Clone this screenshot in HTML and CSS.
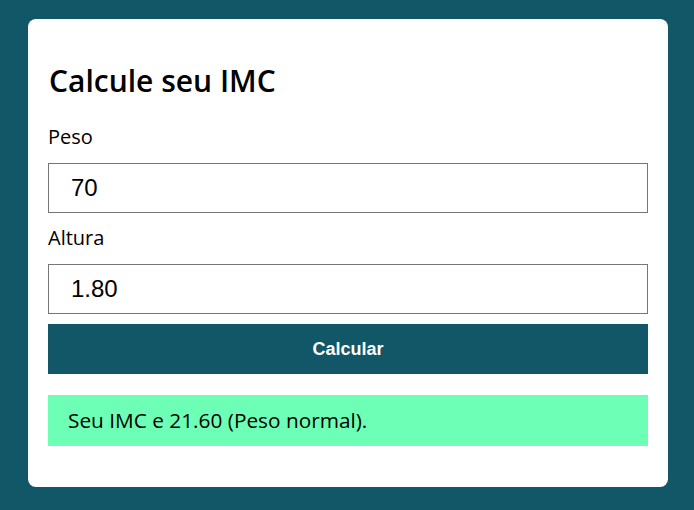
FILE: index.html
```html
<!DOCTYPE html>
<html lang="pt">
<head>
<meta charset="utf-8">
<title>Calcule seu IMC</title>
<link rel="stylesheet" href="styles.css">
</head>
<body>
  <main class="card">
    <h1 class="title">Calcule seu IMC</h1>
    <label class="label" for="peso">Peso</label>
    <input class="field" id="peso" type="text" value="70">
    <label class="label" for="altura">Altura</label>
    <input class="field" id="altura" type="text" value="1.80">
    <button class="btn" type="button">Calcular</button>
    <div class="result">Seu IMC e 21.60 (Peso normal).</div>
  </main>
</body>
</html>
```

FILE: styles.css
```css
html, body {
  margin: 0;
  padding: 0;
  background: #115767;
  height: 100%;
}
body {
  padding: 19px 26px 0 28px;
  box-sizing: border-box;
  font-family: "Open Sans", "Noto Sans", sans-serif;
}
.card {
  background: #ffffff;
  border-radius: 8px;
  padding: 20px 20px 41px;
  display: flex;
  flex-direction: column;
}
.title {
  font-size: 30px;
  font-weight: 600;
  line-height: 41px;
  margin: 21px 0 0 1px;
  color: #000;
}
.label {
  display: block;
  font-size: 20px;
  line-height: 30px;
  margin: 10px 0 11px;
  color: #000;
}
.title + .label {
  margin-top: 21px;
}
.field {
  display: block;
  box-sizing: border-box;
  width: 100%;
  height: 50px;
  margin: 0;
  padding: 0 22px;
  border: 1px solid #767676;
  border-radius: 0;
  font-family: "Liberation Sans", Arial, sans-serif;
  font-size: 24px;
  color: #000;
  background: #fff;
  outline: none;
}
.btn {
  display: block;
  width: 100%;
  height: 50px;
  margin: 10px 0 0;
  border: none;
  background: #115767;
  color: #fff;
  font-family: "Liberation Sans", Arial, sans-serif;
  font-weight: bold;
  font-size: 18px;
}
.result {
  margin-top: 21px;
  background: #6cffb5;
  padding: 12px 20px;
  font-size: 20.8px;
  line-height: 27px;
  color: #000;
}
```
